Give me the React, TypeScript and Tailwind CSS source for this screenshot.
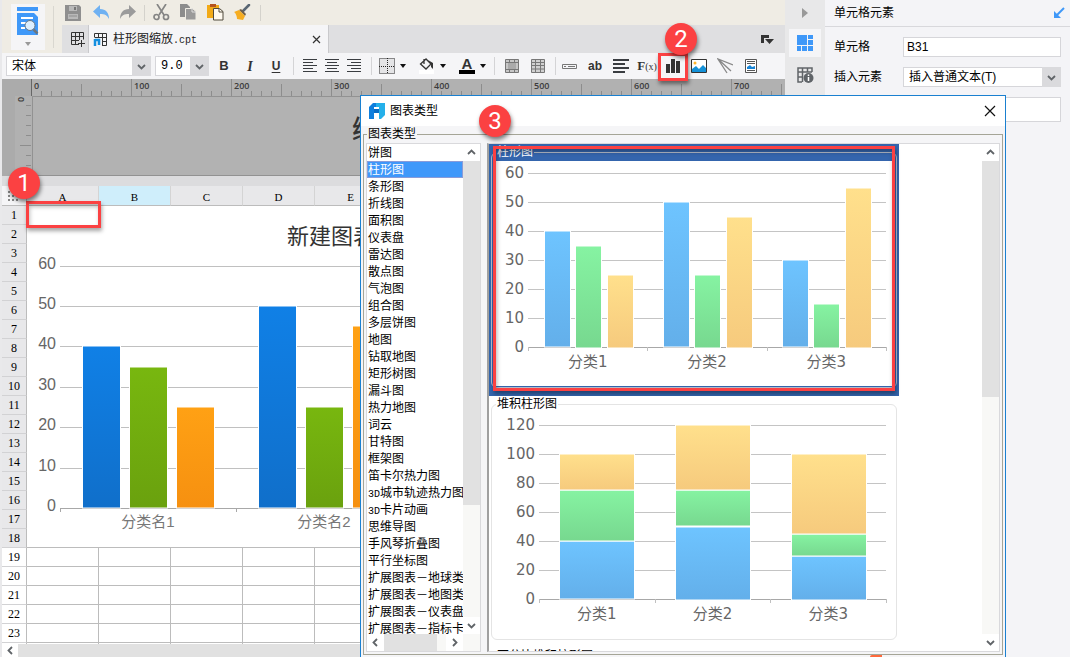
import type { ReactNode } from "react";

interface Series {
  label: string;
  values: number[];
}

const chartTypes = [
  "饼图", "柱形图", "条形图", "折线图", "面积图", "仪表盘", "雷达图", "散点图", "气泡图", "组合图",
  "多层饼图", "地图", "钻取地图", "矩形树图", "漏斗图", "热力地图", "词云", "甘特图", "框架图",
  "笛卡尔热力图", "3D城市轨迹热力图", "3D卡片动画", "思维导图", "手风琴折叠图", "平行坐标图",
  "扩展图表－地球类", "扩展图表－地图类", "扩展图表－仪表盘", "扩展图表－指标卡",
];

const sampleData: Series[] = [
  { label: "分类1", values: [40, 35, 25] },
  { label: "分类2", values: [50, 25, 45] },
  { label: "分类3", values: [30, 15, 55] },
];

const columns = ["A", "B", "C", "D", "E", "F", "G", "H", "I", "J"];
const fills = ["url(#soft-blue)", "url(#soft-green)", "url(#soft-yellow)"];
const deepFills = ["url(#deep-blue)", "url(#deep-green)", "url(#deep-orange)"];

function Gradient({ id, from, to }: { id: string; from: string; to: string }) {
  return (
    <linearGradient id={id} x1="0" y1="0" x2="0" y2="1">
      <stop offset="0" stopColor={from} />
      <stop offset="1" stopColor={to} />
    </linearGradient>
  );
}

function Gradients() {
  return (
    <svg width="0" height="0" className="absolute">
      <defs>
        <Gradient id="soft-blue" from="#6ec4ff" to="#63afea" />
        <Gradient id="soft-green" from="#86f3a2" to="#77d88f" />
        <Gradient id="soft-yellow" from="#ffe08c" to="#f6ca7d" />
        <Gradient id="deep-blue" from="#1080e6" to="#106fca" />
        <Gradient id="deep-green" from="#78b70f" to="#6aa10e" />
        <Gradient id="deep-orange" from="#ffa114" to="#f69010" />
      </defs>
    </svg>
  );
}

/* Preview chart used in the type gallery */
function PreviewChart({ stacked }: { stacked?: boolean }) {
  const max = stacked ? 120 : 60;
  const left = stacked ? 43 : 32;
  const right = 390;
  const base = 186;
  const scale = 174 / max;
  const step = (right - left) / 3;
  const starts = stacked ? [64, 180, 296] : [49, 168, 287];

  return (
    <svg
      width="396"
      height="225"
      className="block bg-white font-['DejaVu_Sans','Noto_Sans_CJK_SC',sans-serif] text-[15px]"
    >
      {[0, 1, 2, 3, 4, 5, 6].map((i) => (
        <g key={i}>
          <rect x={left} y={base - i * 29} width={right - left} height="1" fill={i === 0 ? "#a8a8a8" : "#c4c4c4"} />
          <text x={left - 4} y={base - i * 29 + 5} textAnchor="end" fill="#666">
            {(max / 6) * i}
          </text>
        </g>
      ))}
      {[0, 1, 2, 3].map((i) => (
        <rect key={i} x={Math.round(left + i * step)} y={base} width="1" height="4" fill="#c0c0c0" />
      ))}
      {sampleData.map((item, g) => {
        let sum = 0;
        return (
          <g key={item.label}>
            {item.values.map((v, i) => {
              const height = v * scale;
              sum += v;
              const x = stacked ? starts[g] : starts[g] + [0, 31, 63][i];
              const y = stacked ? base - sum * scale : base - height;
              return (
                <rect
                  key={i}
                  x={x - 0.5}
                  y={Math.round(y)}
                  width={stacked ? 75 : 26}
                  height={Math.round(height)}
                  fill={fills[i]}
                  stroke="#fff"
                />
              );
            })}
            <text x={left + step * (g + 0.5)} y={base + 20} textAnchor="middle" fill="#666">
              {item.label}
            </text>
          </g>
        );
      })}
    </svg>
  );
}

function SheetChart() {
  const groups = [
    { x: 56, label: "分类名1", values: [40, 35, 25] },
    { x: 232, label: "分类名2", values: [50, 25, 45] },
  ];

  return (
    <svg width="720" height="341" className="block bg-white text-[16px]">
      <text x="260" y="38" fontSize="22" fill="#333">新建图表</text>
      {[0, 1, 2, 3, 4, 5, 6].map((i) => (
        <g key={i}>
          <rect x="33" y={Math.round(302 - i * 40.4)} width="528" height="1" fill={i === 0 ? "#a8a8a8" : "#c0c0c0"} />
          <text x="29" y={Math.round(305 - i * 40.4)} textAnchor="end" fill="#666">{i * 10}</text>
        </g>
      ))}
      {[33, 209, 385, 561].map((x) => (
        <rect key={x} x={x} y="302" width="1" height="4" fill="#a8a8a8" />
      ))}
      {groups.map((g) => (
        <g key={g.label}>
          {g.values.map((v, i) => (
            <rect
              key={i}
              x={g.x + i * 47 - 0.5}
              y={Math.round(302 - v * 4.04)}
              width="38"
              height={Math.round(v * 4.04)}
              fill={deepFills[i]}
              stroke="#fff"
            />
          ))}
          <text x={g.x + 65} y="321" textAnchor="middle" fontSize="15" fill="#777">{g.label}</text>
        </g>
      ))}
    </svg>
  );
}

function Chevron({ d }: { d: "up" | "down" | "left" | "right" }) {
  const paths = { up: "M3 8 6.500 4.500 10 8", down: "M3 5 6.500 8.500 10 5", left: "M8 3 4.500 6.500 8 10", right: "M5 3 8.500 6.500 5 10" };
  return (
    <svg width="13" height="13" viewBox="0 0 13 13" fill="none" stroke="#606468" strokeWidth="1.8">
      <path d={paths[d]} />
    </svg>
  );
}

function Caret() {
  return (
    <button aria-label="更多" className="flex h-5 w-[14px] items-center">
      <svg width="6" height="4"><path d="M0 0h6L3 4z" fill="#111" /></svg>
    </button>
  );
}

function Tool({ label, narrow, children }: { label: string; narrow?: boolean; children: ReactNode }) {
  return (
    <button aria-label={label} className={`flex h-6 items-center justify-center text-[#333] ${narrow ? "w-[22px]" : "w-[26px]"}`}>
      {children}
    </button>
  );
}

function Lines({ rows }: { rows: number[][] }) {
  const thick = rows.length < 5;
  return (
    <svg width="16" height="14" fill="#3a3d41">
      {rows.map(([x, w], i) => (
        <rect key={i} x={x} y={i * (thick ? 4 : 3)} width={w} height={thick ? 2 : 1} />
      ))}
    </svg>
  );
}

function Divider() {
  return <span className="h-[18px] w-px bg-[#d4d4d6]" />;
}

function Select({ label, value, className }: { label: string; value: string; className: string }) {
  return (
    <div className={`relative flex h-5 ${className}`}>
      <select
        aria-label={label}
        defaultValue={value}
        className="w-full appearance-none border border-[#d6d6da] bg-white pl-[5px] text-[12px] leading-4 text-black outline-none"
      >
        <option>{value}</option>
      </select>
      <span className="pointer-events-none absolute inset-y-0 right-0 flex w-[19px] items-center justify-center bg-[#dadadd]">
        <Chevron d="down" />
      </span>
    </div>
  );
}

function QuickAccess() {
  return (
    <div className="flex h-[25px] items-center">
      <button aria-label="保存" className="flex w-[22px] justify-center">
        <svg width="16" height="16"><path d="M0 0h14l2 2v14H0z" fill="#8f8f8f" /><path d="M4 1h8v5H4zM3 9h10v5H3z" fill="#b9b9b9" /><path d="M9 2h2v3H9z" fill="#777" /><path d="M4 11h8" stroke="#8f8f8f" /></svg>
      </button>
      <button aria-label="撤销" className="ml-1 flex w-[26px] justify-center">
        <svg width="17" height="15"><path d="M7 0v4c6 0 9 4 9 10-2-4-4-5-9-5v4L0 6.500z" fill="#6fb1f2" /></svg>
      </button>
      <button aria-label="重做" className="flex w-[27px] justify-center">
        <svg width="17" height="15"><path d="M10 0v4c-6 0-9 4-9 10 2-4 4-5 9-5v4l7-6.500z" fill="#9b9b9b" /></svg>
      </button>
      <span className="ml-[3px] h-4 w-px bg-[#d4d2cc]" />
      <button aria-label="剪切" className="ml-[3px] flex w-[27px] justify-center">
        <svg width="17" height="17" fill="none" stroke="#858585" strokeWidth="1.7"><path d="m4 0 7 11M13 0 6 11" /><circle cx="3.500" cy="13" r="2.500" /><circle cx="13" cy="13" r="2.500" /></svg>
      </button>
      <button aria-label="复制" className="flex w-[27px] justify-center">
        <svg width="17" height="17"><path d="M0 0h7l3 3v10H0z" fill="#8c8c8c" /><path d="M5.500 4.500h7l3.500 3V16H5.500z" fill="#9a9a9a" stroke="#efece4" /><path d="M12 4v4h4" fill="none" stroke="#ddd" /></svg>
      </button>
      <button aria-label="粘贴" className="flex w-[27px] justify-center">
        <svg width="17" height="17"><path d="M0 1h12v13H0z" fill="#f2aa17" /><path d="M3 0h6v3H3z" fill="#b5531d" /><path d="M6.500 4.500h6l3.500 3V16H6.500z" fill="#fffaf0" stroke="#514b3c" /><path d="M12 5v3h4" fill="none" stroke="#514b3c" /></svg>
      </button>
      <button aria-label="格式刷" className="flex w-[27px] justify-center">
        <svg width="17" height="17"><path d="m15 1-6 6" stroke="#596673" strokeWidth="2.500" strokeLinecap="round" /><path d="m7 5 5 5-1 2-6-6z" fill="#72614a" /><path d="M5 6 0 8c2 1 3 5 3 7l6 1 2-4z" fill="#f6ad20" /></svg>
      </button>
      <span className="ml-1 h-4 w-px bg-[#d4d2cc]" />
    </div>
  );
}

function Tabs() {
  return (
    <div className="flex h-7 bg-[#dfdfe1]">
      <button aria-label="新建表格" className="flex w-[26px] items-center justify-end pr-[2px]">
        <svg width="16" height="15" fill="none" stroke="#333"><path d="M9 12.500H1.500V.5h12v7M1.500 4.500h12M1.500 8.500H9M5.500 .5v12M9.500 .5V8M8 11.500h7M11.500 8v7" /></svg>
      </button>
      <div className="flex w-[241px] items-center border-x border-[#c9c9cc] bg-[#f5f5f7] px-1 text-[12px] text-[#222]">
        <svg width="15" height="15" fill="none" stroke="#333"><path d="M1.500 5V1.500h12v12H9M1.500 5.500h12M9 9.500h5M5.500 1v4M9.500 1v13" /><path d="M2 7v7M2 8h4v5" stroke="#1690e0" strokeWidth="2.500" /></svg>
        <span className="ml-[5px]">柱形图缩放<span className="font-['Liberation_Mono',monospace] text-[10px]">.cpt</span></span>
        <button aria-label="关闭标签" className="ml-auto p-[3px]">
          <svg width="9" height="9" stroke="#333" strokeWidth="1.200"><path d="m1 1 7 7M8 1 1 8" /></svg>
        </button>
      </div>
      <button aria-label="标签列表" className="ml-auto mr-[11px] self-center">
        <svg width="13" height="11" fill="#333"><path d="M0 1h8v3H3v5H0zM4 5h9l-4.500 5z" /></svg>
      </button>
    </div>
  );
}

function FormatBar() {
  const left = [[1, 14], [1, 10], [1, 14], [1, 10], [1, 14]];
  const center = [[1, 14], [3, 10], [1, 14], [3, 10], [1, 14]];
  const right = [[1, 14], [5, 10], [1, 14], [5, 10], [1, 14]];
  return (
    <div className="flex h-[26px] shrink-0 items-center bg-[#f5f5f7] pl-1">
      <Select label="字体" value="宋体" className="w-[145px]" />
      <Select label="字号" value="9.0" className="ml-1 mr-[2px] w-[54px] font-['Liberation_Mono',monospace]" />
      <Tool label="加粗"><b className="text-[13px]">B</b></Tool>
      <Tool label="斜体"><i className="font-['Liberation_Serif',serif] text-[14px] font-bold">I</i></Tool>
      <Tool label="下划线"><span className="text-[12px] font-bold underline underline-offset-2">U</span></Tool>
      <span className="w-1" />
      <Divider />
      <span className="w-[5px]" />
      <Tool narrow label="左对齐"><Lines rows={left} /></Tool>
      <Tool narrow label="居中"><Lines rows={center} /></Tool>
      <Tool narrow label="右对齐"><Lines rows={right} /></Tool>
      <span className="w-[6px]" />
      <Divider />
      <span className="w-[2px]" />
      <Tool label="边框">
        <svg width="16" height="16" fill="#e4e4e6" stroke="#222" strokeDasharray="1 1"><path d="M.5 .5h15v15H.5zM8.500 0v16M0 8.500h16" /></svg>
      </Tool>
      <Caret />
      <Tool label="填充颜色">
        <svg width="16" height="16"><path d="M0 12h15v4H0z" fill="#fff" /><path d="M7 1 1.500 6 7 11l5-5zM5 1v5" fill="none" stroke="#333" strokeWidth="1.300" /><path d="m9 2 5 3v6l-2-2V6z" fill="#333" /></svg>
      </Tool>
      <Caret />
      <Tool label="字体颜色">
        <span className="flex w-4 flex-col items-center border-b-4 border-black text-[15px] leading-3 font-bold">A</span>
      </Tool>
      <Caret />
      <Divider />
      <span className="w-1" />
      <Tool label="合并单元格">
        <svg width="14" height="14"><path d="M.5 .5h13v13H.5z" fill="#c6c6c6" stroke="#777" /><path d="M0 3.500h14M0 10.500h14M4.500 0v3M9.500 0v3M4.500 11v3M9.500 11v3" stroke="#777" /><path d="M3 4h8v6H3z" fill="#aaa" /></svg>
      </Tool>
      <Tool label="取消合并">
        <svg width="14" height="14" fill="#d0d0d0" stroke="#777"><path d="M.5 .5h13v13H.5zM0 3.500h14M0 6.500h14M0 10h14M4.500 0v14M9.500 0v14" /></svg>
      </Tool>
      <span className="w-1" />
      <Divider />
      <Tool label="控件">
        <svg width="15" height="5" fill="none" stroke="#777"><path d="M.5 .5h14v4H.5zM2 2.500h2M6 2.500h7" /></svg>
      </Tool>
      <Tool label="文本"><b className="text-[12px]">ab</b></Tool>
      <Tool label="富文本"><Lines rows={[[0, 16], [0, 12], [0, 16], [0, 12]]} /></Tool>
      <Tool label="公式">
        <span className="font-['Liberation_Serif',serif] text-[13px] font-bold">F<span className="text-[10px] font-normal">(x)</span></span>
      </Tool>
      <div className="relative">
        <Tool label="插入图表">
          <svg width="14" height="14" fill="#333"><path d="M0 5h4v9H0zM5 0h4v14H5zM10 2h4v12h-4z" /></svg>
        </Tool>
        <span className="pointer-events-none absolute -inset-x-[2px] -top-px -bottom-[3px] border-[3px] border-[#fb4142] shadow-[1px_3px_4px_rgba(0,0,0,.45)]" />
        <StepBadge n={2} className="-top-[31px] left-[5px]" />
      </div>
      <Tool label="图片">
        <svg width="16" height="14"><path d="M.5 .5h15v13H.5z" fill="#fff" stroke="#333" /><path d="M1 13v-3l4-3 3 3 4-4 3 3v4z" fill="#1491d8" /><circle cx="4" cy="4" r="1.500" fill="#ffb52b" /></svg>
      </Tool>
      <Tool label="斜线">
        <svg width="16" height="16" fill="none" stroke="#888" strokeWidth="1.300"><path d="M16 7 1 1l9 14M1 1l13 12" /></svg>
      </Tool>
      <Tool label="子报表">
        <svg width="12" height="14"><path d="M.5 .5h11v13H.5z" fill="#fff" stroke="#555" /><path d="M2 2.500h8M2 4.500h8M2 11.500h8" stroke="#555" /><path d="M2 10V8l3-2 2 2 3-1v3z" fill="#1683d5" /></svg>
      </Tool>
    </div>
  );
}

function Ruler() {
  return (
    <svg height="17" className="block w-full shrink-0 bg-[#b1b1b1]">
      <rect width="29" height="17" fill="#ababab" />
      <rect x="29" width="1" height="17" fill="#666" />
      {Array.from({ length: 75 }, (_, i) => i + 1).map((i) => {
        const h = i % 10 === 0 ? 17 : i % 5 === 0 ? 12 : 5;
        return <rect key={i} x={29 + i * 10} y={17 - h} width="1" height={h} fill="#8d8d8d" />;
      })}
      {[0, 100, 200, 300, 400, 500, 600, 700].map((n) => (
        <text key={n} x={32 + n} y="10" fill="#3c3c3c" className="font-['Open_Sans',sans-serif] font-semibold" fontSize="9">{n}</text>
      ))}
    </svg>
  );
}

function StepBadge({ n, className }: { n: number; className: string }) {
  return (
    <span className={`absolute z-20 flex h-8 w-8 items-center justify-center rounded-full bg-[#fb4142] font-['Roboto',sans-serif] text-[24px] leading-8 text-white shadow-[1px_3px_4px_rgba(0,0,0,.5)] ${className}`}>
      {n}
    </span>
  );
}

function Sheet() {
  const rows = Array.from({ length: 24 }, (_, i) => i + 1);
  return (
    <div className="relative min-h-0 flex-1">
      <div className="h-full overflow-hidden bg-white">
        <table className="w-[745px] table-fixed border-separate border-spacing-0 text-center font-['Liberation_Serif','Noto_Sans_CJK_SC',serif] text-[12px] leading-4 text-black">
          <thead>
            <tr className="h-5 bg-[#e8e8ea]">
              <th className="w-[25px] border-r border-b border-[#bcbcbc] bg-[#f5f5f7] p-0">
                <svg width="12" height="10" fill="#888" className="mx-auto">
                  {[0, 4, 8].map((x) => [0, 4, 8].map((y) => <rect key={`${x}-${y}`} x={x} y={y} width="2" height="2" />))}
                </svg>
              </th>
              {columns.map((c) => (
                <th
                  key={c}
                  className={`w-[72px] border-r border-b border-r-[#d4d4d4] border-b-[#bcbcbc] p-0 pt-[2px] text-[11px] font-normal ${c === "B" ? "bg-[#cfeefb]" : ""}`}
                >
                  {c}
                </th>
              ))}
            </tr>
          </thead>
          <tbody>
            {rows.map((r) => (
              <tr key={r} className="h-[19px]">
                <th
                  className={`border-r border-b border-r-[#bcbcbc] border-b-[#d2d2d4] p-0 font-normal ${r < 19 ? "bg-[#e8e8ea]" : "bg-white"}`}
                >
                  {r}
                </th>
                {r === 1 && (
                  <td rowSpan={18} colSpan={columns.length} className="border-b border-[#bcbcbc] p-0 font-['Liberation_Sans','Noto_Sans_CJK_SC',sans-serif]">
                    <SheetChart />
                  </td>
                )}
                {r > 18 && columns.map((c) => <td key={c} className="border-r border-b border-[#bcbcbc] p-0" />)}
              </tr>
            ))}
          </tbody>
        </table>
      </div>
      <span className="pointer-events-none absolute top-[15px] left-6 h-[27px] w-[75px] border-[3px] border-[#fb4142] shadow-[1px_3px_4px_rgba(0,0,0,.35),inset_1px_3px_4px_rgba(0,0,0,.25)]" />
      <StepBadge n={1} className="-top-[19px] left-[6px]" />
    </div>
  );
}

function Designer() {
  return (
    <main className="flex min-w-0 flex-1 flex-col border-l-2 border-[#e9e9eb]">
      <header className="flex h-[53px] shrink-0 bg-[#efece4] pl-[9px]">
        <button aria-label="预览" className="mt-1 flex h-[46px] w-[34px] flex-col items-center bg-[#f5f5f7] pt-[3px]">
          <svg width="22" height="28">
            <path d="M0 0h21v4H0zM0 6h17l4 4v18H0z" fill="#3f98f8" />
            <path d="M4 11h12M4 16h5M4 21h4" stroke="#fff" strokeWidth="2" />
            <circle cx="13" cy="18.500" r="5" fill="#dcefff" stroke="#6b7680" />
            <path d="m16.500 22.500 4 4" stroke="#6b7680" strokeWidth="2.500" />
          </svg>
          <svg width="6" height="4" className="mt-[7px]"><path d="M0 0h6L3 4z" fill="#999" /></svg>
        </button>
        <span className="mt-[6px] ml-2 h-[42px] w-px bg-[#d9d7d0]" />
        <div className="ml-2 flex-1">
          <QuickAccess />
          <Tabs />
        </div>
      </header>
      <FormatBar />
      <Ruler />
      <div className="flex h-20 shrink-0 overflow-hidden">
        <svg width="30" height="80" className="shrink-0 bg-[#b1b1b1]">
          <rect width="13" height="80" fill="#ababab" />
          {[1, 2, 3, 4, 5, 6, 7].map((i) => (
            <rect key={i} x={i === 5 ? 18 : 24} y={i * 10 - 1} width={i === 5 ? 11 : 5} height="1" fill="#8d8d8d" />
          ))}
          <text x="-6" y="22" transform="rotate(-90)" fontSize="9" fill="#3c3c3c" className="font-['Open_Sans',sans-serif] font-semibold">0</text>
        </svg>
        <div className="flex-1 border border-r-0 border-[#929292] bg-[#b2b2b2] pt-[17px] pl-[319px] text-[26px] leading-8 font-medium text-[#333]">
          编
        </div>
      </div>
      <div className="h-[10px] shrink-0 bg-[#dcdcde]" />
      <Sheet />
      <div className="flex h-[13px] shrink-0 bg-[#e1e1e1]">
        <button aria-label="向左滚动" className="flex w-4 justify-center bg-white"><Chevron d="left" /></button>
      </div>
    </main>
  );
}

function PropertyPanel() {
  return (
    <aside className="flex w-[285px] shrink-0 bg-[#f4f4f7] text-[12px] text-black">
      <nav className="flex w-10 flex-col items-center bg-[#e8e8e9]">
        <button aria-label="收起面板" className="flex h-[29px] items-center pb-1">
          <svg width="6" height="10"><path d="M0 0v10l6-5z" fill="#999" /></svg>
        </button>
        <button aria-label="单元格元素" className="flex h-7 w-8 items-center justify-center bg-[#f5f5f7]">
          <svg width="16" height="16" fill="#3f98f8"><path d="M0 0h10v10H0zM11 0h5v4h-5zM11 5h5v5h-5zM0 11h4v5H0zM5 11h5v5H5zM11 11h5v5h-5z" /></svg>
        </button>
        <button aria-label="单元格属性" className="mt-[10px] flex">
          <svg width="17" height="17" fill="none" stroke="#606468" strokeWidth="1.500"><path d="M5 15H1V1h14v4M1 5h14M1 10h5M5.500 1v14M10.500 1v4" /><circle cx="11.500" cy="11" r="5" fill="#606468" stroke="none" /><path d="M11.500 7.500v1.500M11.500 10v4" stroke="#fff" /></svg>
        </button>
      </nav>
      <div className="min-w-0 flex-1">
        <div className="flex h-[27px] items-center justify-between border-b border-[#d8d8dc] pr-[5px] pl-[9px]">
          <h2>单元格元素</h2>
          <svg width="12" height="12" fill="none" stroke="#3f98f8" strokeWidth="2"><path d="M11 1 3 9" /><path d="M1 4v7h7z" fill="#3f98f8" stroke="none" /></svg>
        </div>
        <div className="flex flex-col gap-[10px] pt-[10px] pr-[9px] pl-[9px]">
          <div className="flex items-center">
            <label htmlFor="cell" className="w-[69px]">单元格</label>
            <input id="cell" defaultValue="B31" className="h-5 min-w-0 flex-1 border border-[#d6d6da] bg-white px-[3px] text-[12px] outline-none" />
          </div>
          <div className="flex items-center">
            <span className="w-[69px]">插入元素</span>
            <Select label="插入元素" value="插入普通文本(T)" className="flex-1" />
          </div>
          <input aria-label="内容" className="ml-[69px] h-[25px] border border-[#d6d6da] bg-white outline-none" />
        </div>
      </div>
    </aside>
  );
}

function VerticalScroll({ thumb }: { thumb: string }) {
  return (
    <div className="flex w-[17px] shrink-0 flex-col bg-[#f8f8f6]">
      <button aria-label="向上滚动" className="flex h-[17px] items-center justify-center bg-white"><Chevron d="up" /></button>
      <div className={`bg-[#e1e1e1] ${thumb}`} />
      <button aria-label="向下滚动" className="mt-auto flex h-[17px] items-center justify-center bg-white"><Chevron d="down" /></button>
    </div>
  );
}

function TypeCard({ title, selected, children }: { title: string; selected?: boolean; children?: ReactNode }) {
  return (
    <div className={`relative h-[252px] w-[410px] px-[2px] ${selected ? "bg-[#3465ad]" : "bg-white"}`}>
      <fieldset className={`h-[244px] rounded-md border px-1 pt-px ${selected ? "border-[#b4bccb]" : "border-[#e4e4e4]"}`}>
        <legend className={`h-4 px-px text-[12px] leading-4 ${selected ? "text-white" : "text-black"}`}>{title}</legend>
        {children}
      </fieldset>
      {selected && (
        <span className="pointer-events-none absolute top-[2px] right-1 bottom-[5px] left-1 border-[3px] border-[#fb4142] shadow-[1px_3px_4px_rgba(0,0,0,.35),inset_1px_3px_4px_rgba(0,0,0,.3)]" />
      )}
    </div>
  );
}

function ChartDialog() {
  return (
    <div role="dialog" aria-label="图表类型" className="absolute top-[95px] bottom-0 left-[360px] z-10 flex w-[646px] flex-col border border-b-0 border-[#1a80d0] bg-[#f5f5f7] text-[12px] text-black">
      <div className="flex h-[30px] shrink-0 items-center bg-white pr-[9px] pl-2">
        <svg width="16" height="16">
          <path d="M4 0h4v4H5v12H0V4z" fill="#0f7fdd" />
          <path d="M5 6h6v4H5z" fill="#0a6cc4" />
          <path d="M7 0h9v12l-4 4h-2V4H7z" fill="#24b0ea" />
        </svg>
        <h1 className="ml-[5px]">图表类型</h1>
        <button aria-label="关闭" className="ml-auto">
          <svg width="12" height="12" stroke="#111" strokeWidth="1.200"><path d="m1 1 10 10M11 1 1 11" /></svg>
        </button>
      </div>
      <fieldset className="mr-[2px] mb-[2px] ml-[2px] flex min-h-0 min-w-0 flex-1 border border-[#a5a597] px-[2px] pt-px pb-[2px]">
        <legend className="ml-px h-4 px-px leading-4">图表类型</legend>
        <div className="flex w-[115px] shrink-0 flex-col border border-[#d9d9dc] bg-white">
          <div className="flex min-h-0 flex-1">
            <ul className="min-w-0 flex-1 overflow-hidden">
              {chartTypes.map((name) => (
                <li
                  key={name}
                  className={`h-[17px] pl-px leading-[18px] whitespace-nowrap ${name === "柱形图" ? "bg-[#3f98fa] text-white outline outline-1 -outline-offset-1 outline-[#8a9bd8]" : ""}`}
                >
                  {name.startsWith("3D") ? (
                    <>
                      <span className="font-['Liberation_Mono',monospace] text-[10px]">3D</span>
                      {name.slice(2)}
                    </>
                  ) : (
                    name
                  )}
                </li>
              ))}
            </ul>
            <VerticalScroll thumb="h-[344px]" />
          </div>
          <div className="flex h-[17px] shrink-0 bg-[#f8f8f6] pr-[17px]">
            <button aria-label="向左滚动" className="flex w-[17px] items-center justify-center bg-white"><Chevron d="left" /></button>
            <div className="w-[53px] bg-[#e1e1e1]" />
            <button aria-label="向右滚动" className="ml-auto flex w-[17px] items-center justify-center bg-white"><Chevron d="right" /></button>
          </div>
        </div>
        <div className="ml-[6px] flex min-w-0 flex-1 border border-l-2 border-[#d9d9dc] border-l-[#a0a0a0] bg-white">
          <div className="min-w-0 flex-1 overflow-hidden">
            <TypeCard title="柱形图" selected><PreviewChart /></TypeCard>
            <TypeCard title="堆积柱形图"><PreviewChart stacked /></TypeCard>
            <TypeCard title="百分比堆积柱形图" />
          </div>
          <VerticalScroll thumb="h-[236px]" />
        </div>
      </fieldset>
      <StepBadge n={3} className="top-[9px] left-[118px]" />
      <span className="absolute bottom-0 left-[509px] h-[2px] w-3 rounded-tl-full bg-[#ff6a3c]" />
    </div>
  );
}

export default function App() {
  return (
    <div className="relative flex h-screen overflow-hidden font-['Liberation_Sans','Noto_Sans_CJK_SC',sans-serif]">
      <Gradients />
      <Designer />
      <PropertyPanel />
      <ChartDialog />
    </div>
  );
}
